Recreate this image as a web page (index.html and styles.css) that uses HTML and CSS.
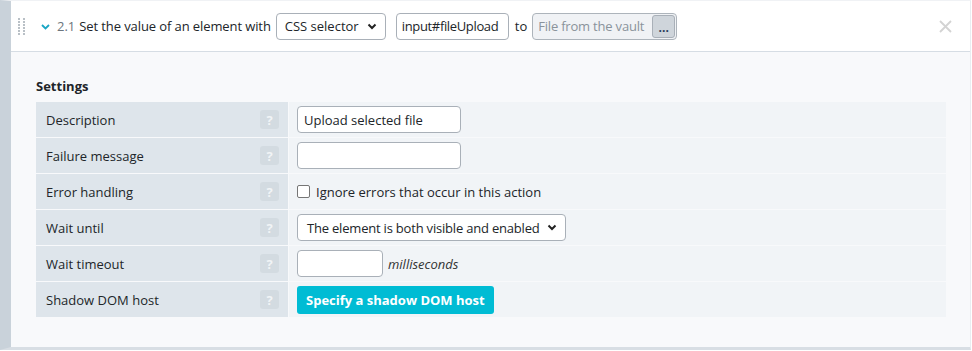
FILE: index.html
```html
<!DOCTYPE html>
<html>
<head>
<meta charset="utf-8">
<link rel="stylesheet" href="styles.css">
</head>
<body>
<div class="card">
  <div class="head">
    <span class="grip">
      <svg width="7" height="18" viewBox="0 0 7 18"><g fill="#b9c0c6">
        <rect x="0" y="0" width="2" height="2"/><rect x="5" y="0" width="2" height="2"/>
        <rect x="0" y="3" width="2" height="2"/><rect x="5" y="3" width="2" height="2"/>
        <rect x="0" y="6" width="2" height="2"/><rect x="5" y="6" width="2" height="2"/>
        <rect x="0" y="9" width="2" height="2"/><rect x="5" y="9" width="2" height="2"/>
        <rect x="0" y="12" width="2" height="2"/><rect x="5" y="12" width="2" height="2"/>
        <rect x="0" y="15" width="2" height="2"/><rect x="5" y="15" width="2" height="2"/>
      </g></svg>
    </span>
    <span class="chev">
      <svg width="9" height="6" viewBox="0 0 9 6"><path d="M1 1l3.5 3.5L8 1" fill="none" stroke="#1aa6c4" stroke-width="1.8"/></svg>
    </span>
    <span class="num">2.1</span>
    <span class="txt">Set the value of an element with</span>
    <span class="sel sel-css">CSS selector<svg class="caret" width="10" height="7" viewBox="0 0 10 7"><path d="M1.5 1.5l3.5 3.5 3.5-3.5" fill="none" stroke="#222" stroke-width="2"/></svg></span>
    <span class="inp inp-sel">input#fileUpload</span>
    <span class="to">to</span>
    <span class="grp"><span class="ph">File from the vault</span><span class="dots">...</span></span>
    <span class="close">
      <svg width="13" height="13" viewBox="0 0 13 13"><path d="M1 1l11 11M12 1L1 12" stroke="#d3d3d3" stroke-width="1.8"/></svg>
    </span>
  </div>
  <div class="body">
    <div class="title">Settings</div>
    <div class="table">
      <div class="row">
        <div class="lab"><span>Description</span><span class="help">?</span></div>
        <div class="val"><span class="inp inp-s">Upload selected file</span></div>
      </div>
      <div class="row">
        <div class="lab"><span>Failure message</span><span class="help">?</span></div>
        <div class="val"><span class="inp inp-s"></span></div>
      </div>
      <div class="row">
        <div class="lab"><span>Error handling</span><span class="help">?</span></div>
        <div class="val"><span class="cb"></span><span>Ignore errors that occur in this action</span></div>
      </div>
      <div class="row">
        <div class="lab"><span>Wait until</span><span class="help">?</span></div>
        <div class="val"><span class="sel sel-wait">The element is both visible and enabled<svg class="caret" width="10" height="7" viewBox="0 0 10 7"><path d="M1.5 1.5l3.5 3.5 3.5-3.5" fill="none" stroke="#222" stroke-width="2"/></svg></span></div>
      </div>
      <div class="row">
        <div class="lab"><span>Wait timeout</span><span class="help">?</span></div>
        <div class="val"><span class="inp inp-t"></span><em class="ms">milliseconds</em></div>
      </div>
      <div class="row">
        <div class="lab"><span>Shadow DOM host</span><span class="help">?</span></div>
        <div class="val"><span class="btn">Specify a shadow DOM host</span></div>
      </div>
    </div>
  </div>
</div>
</body>
</html>
```
FILE: styles.css
```css
* { box-sizing: border-box; }
html, body { margin: 0; padding: 0; background: #ffffff; }
body {
  font-family: "Open Sans", "Noto Sans", sans-serif;
  font-size: 13px;
  color: #212529;
  width: 972px;
  height: 351px;
  overflow: hidden;
}
.card {
  width: 971px;
  height: 350px;
  border-left: 11px solid #c9d2da;
  border-top: 1px solid #f0f2f5;
  border-right: 1px solid #e9edf1;
  border-bottom: 3px solid #d8dee4;
  display: flex;
  flex-direction: column;
}
.head {
  height: 51px;
  background: #fff;
  border-bottom: 1px solid #d6dde4;
  display: flex;
  align-items: center;
  padding-left: 7px;
  padding-right: 18px;
}
.grip { display: flex; width: 7px; margin-right: 16px; margin-top: 1px; }
.chev { display: flex; margin-right: 7px; margin-top: 1px; }
.num { color: #6c757d; margin-right: 4px; }
.txt { white-space: nowrap; letter-spacing: -0.1px; }
.sel, .inp {
  display: inline-flex;
  align-items: center;
  height: 27px;
  border: 1px solid #a9b0b8;
  border-radius: 4px;
  background: #fff;
  white-space: nowrap;
  color: #212529;
}
.sel { padding: 0 8px 0 8px; justify-content: space-between; }
.sel-css { width: 110px; margin-left: 5px; }
.caret { flex: none; }
.inp-sel { width: 113px; margin-left: 10px; padding: 0 5px; letter-spacing: -0.35px; }
.to { margin: 0 5px 0 6px; }
.grp {
  display: inline-flex;
  align-items: center;
  justify-content: space-between;
  width: 145px;
  height: 27px;
  border: 1px solid #adb4bb;
  border-radius: 4px;
  background: #f0f2f5;
  padding: 0 1px 0 5px;
}
.ph { color: #8a939b; white-space: nowrap; letter-spacing: -0.2px; }
.dots {
  width: 23px;
  height: 23px;
  background: #cfd5db;
  border: 1px solid #a9b0b8;
  border-radius: 3px;
  display: flex;
  align-items: flex-end;
  justify-content: center;
  font-weight: bold;
  color: #2a3a5a;
  line-height: 18px;
  font-size: 12px;
}
.close { margin-left: auto; display: flex; }
.body {
  flex: 1;
  background: #f8f9fb;
  padding: 24px 24px 0 25px;
}
.title { font-weight: bold; font-size: 13px; height: 26px; line-height: 20px; }
.table { display: flex; flex-direction: column; gap: 1px; }
.row { display: flex; height: 35px; }
.lab {
  width: 252px;
  background: #dee5eb;
  display: flex;
  align-items: center;
  justify-content: space-between;
  padding: 0 9px 0 10px;
}
.help {
  width: 19px;
  height: 19px;
  border-radius: 3px;
  background: #d3dbe1;
  color: #f1f4f6;
  font-weight: bold;
  font-size: 13px;
  display: flex;
  align-items: center;
  justify-content: center;
}
.val {
  flex: 1;
  margin-left: 1px;
  background: #f1f4f7;
  display: flex;
  align-items: center;
  padding-left: 8px;
}
.inp-s { width: 164px; height: 27px; padding: 0 6px; }
.inp-t { width: 86px; height: 27px; }
.ms { margin-left: 5px; color: #333; }
.cb {
  width: 13px;
  height: 13px;
  border: 1px solid #767676;
  border-radius: 2px;
  background: #fff;
  margin-right: 6px;
}
.sel-wait { width: 269px; height: 27px; padding: 0 8px 0 9px; letter-spacing: -0.2px; }
.btn {
  background: #00bcd4;
  color: #fff;
  font-weight: bold;
  height: 28px;
  padding: 0 9px;
  border-radius: 3px;
  display: inline-flex;
  align-items: center;
}
```
